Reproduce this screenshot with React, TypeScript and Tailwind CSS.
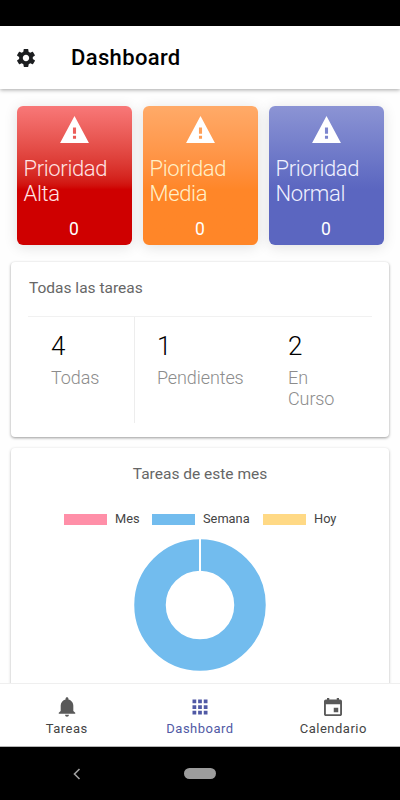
import {
  IoMdApps,
  IoMdCalendar,
  IoMdNotifications,
  IoMdSettings,
  IoMdWarning,
} from "react-icons/io";

const priorities = [
  {
    label: ["Prioridad", "Alta"],
    count: 0,
    className: "from-[#f87878] via-[#cf0000] to-[#cf0000]",
    text: "text-[#ffe3e3]",
  },
  {
    label: ["Pioridad", "Media"],
    count: 0,
    className: "from-[#ffaa68] via-[#ff8628] to-[#ff8628]",
    text: "text-[#fff0c8]",
  },
  {
    label: ["Prioridad", "Normal"],
    count: 0,
    className: "from-[#8c94d4] via-[#5b66c0] to-[#5b66c0]",
    text: "text-[#f0f1ff]",
  },
];

const legend = [
  { label: "Mes", color: "bg-[#ff8fa8]", width: "w-[88px]" },
  { label: "Semana", color: "bg-[#72bcee]", width: "w-[111px]" },
  { label: "Hoy", color: "bg-[#ffd985]", width: "w-[74px]" },
];

function PriorityCard({ label, count, className, text }: (typeof priorities)[number]) {
  return (
    <article
      className={`flex h-[139px] w-[115px] flex-col rounded-md bg-linear-to-b via-60% shadow-[0_2px_14px_rgba(0,0,0,0.12)] ${className}`}
    >
      <IoMdWarning className="mt-[7px] self-center text-white" size={33} />
      <h2
        className={`mt-[10px] pl-[7px] text-[22px] leading-[25px] font-light tracking-[-0.35px] ${text}`}
      >
        {label[0]}
        <br />
        {label[1]}
      </h2>
      <p className="mt-[13px] text-center text-[17.5px] leading-[20px] text-white">{count}</p>
    </article>
  );
}

function Stat({ value, label, className }: { value: number; label: string; className: string }) {
  return (
    <li className={`pt-[14px] ${className}`}>
      <p className="text-[26px] leading-[30px] font-light text-black">{value}</p>
      <p className="mt-[6px] text-[18px] leading-[21px] font-light tracking-[-0.1px] text-[#8c8c8c]">
        {label}
      </p>
    </li>
  );
}

function Donut() {
  return (
    <svg className="mx-auto mt-[12px] block" width="132" height="132" viewBox="0 0 132 132">
      <circle cx="66" cy="66" r="50" fill="none" stroke="#72bcee" strokeWidth="31.5" />
      <path d="M66 0V33" stroke="#fff" strokeWidth="2" />
    </svg>
  );
}

export default function App() {
  return (
    <div className="flex h-[800px] w-[400px] flex-col overflow-hidden bg-black font-[Roboto,sans-serif]">
      <div className="h-[26px] shrink-0" />

      <header className="z-10 flex h-[63px] shrink-0 items-center bg-white pl-[15px] shadow-[0_1px_4px_rgba(0,0,0,0.35)]">
        <IoMdSettings className="text-[#1c1e20]" size={22} />
        <h1 className="ml-[34px] text-[22px] font-medium tracking-[0.35px] text-black">
          Dashboard
        </h1>
      </header>

      <main className="min-h-0 flex-1 overflow-hidden bg-[#fefefe] pt-[17px]">
        <section className="flex justify-center gap-[11px]">
          {priorities.map((p) => (
            <PriorityCard key={p.className} {...p} />
          ))}
        </section>

        <section className="mx-[11px] mt-[17px] h-[175px] rounded bg-white px-[17px] pt-[16px] shadow-[0_1px_3px_rgba(0,0,0,0.4)]">
          <h2 className="pl-px text-[15.5px] leading-[20px] text-[#666]">Todas las tareas</h2>
          <ul className="mt-[18px] flex h-[107px] border-t border-[#f1f1f1]">
            <Stat className="w-[107px] border-r border-[#ededed] pl-[23px]" value={4} label="Todas" />
            <Stat className="w-[131px] pl-[22px]" value={1} label="Pendientes" />
            <Stat className="w-[106px] pr-[30px] pl-[22px]" value={2} label="En Curso" />
          </ul>
        </section>

        <section className="mx-[11px] mt-[11px] h-[280px] rounded bg-white pt-[16px] shadow-[0_1px_3px_rgba(0,0,0,0.3)]">
          <h2 className="text-center text-[15.5px] leading-[20px] text-[#666]">
            Tareas de este mes
          </h2>
          <ul className="mt-[27px] flex h-[16px] pl-[53px] text-[12.8px] text-[#444]">
            {legend.map((l) => (
              <li key={l.label} className={`flex shrink-0 items-center gap-[8px] ${l.width}`}>
                <span className={`h-[11px] w-[43px] shrink-0 ${l.color}`} />
                {l.label}
              </li>
            ))}
          </ul>
          <Donut />
        </section>
      </main>

      <nav className="z-10 flex h-[63px] shrink-0 border-t border-[#efefef] bg-white text-[13px] leading-[16px] tracking-[0.5px] text-[#444]">
        <a className="flex flex-1 flex-col items-center pt-[11px]">
          <IoMdNotifications className="text-[#595959]" size={24} />
          <span className="mt-[2px]">Tareas</span>
        </a>
        <a className="flex flex-1 flex-col items-center pt-[11px] text-[#5059a5]">
          <IoMdApps size={24} />
          <span className="mt-[2px]">Dashboard</span>
        </a>
        <a className="flex flex-1 flex-col items-center pt-[11px]">
          <IoMdCalendar className="text-[#595959]" size={24} />
          <span className="mt-[2px]">Calendario</span>
        </a>
      </nav>
      <div className="h-px shrink-0 bg-[#b5b5b5]" />

      <footer className="flex h-[53px] shrink-0 items-center">
        <svg className="ml-[73px]" width="8" height="12" viewBox="0 0 8 12">
          <path d="M6.5 1L1.5 6l5 5" fill="none" stroke="#a0a0a0" strokeWidth="1.6" />
        </svg>
        <span className="ml-[103px] h-[11px] w-[32px] rounded-full bg-[#9c9c9c]" />
      </footer>
    </div>
  );
}
